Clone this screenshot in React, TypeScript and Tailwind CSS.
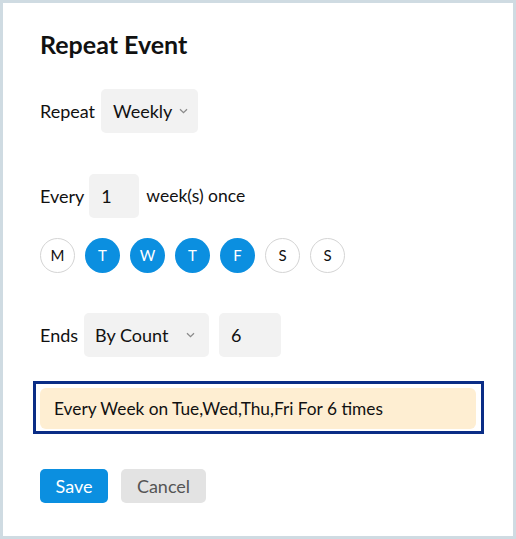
import React from "react";

const Chevron = () => (
  <svg width="9" height="6" viewBox="0 0 9 6" fill="none" className="shrink-0">
    <path d="M1 1.2 L4.5 4.6 L8 1.2" stroke="#8a8a8a" strokeWidth="1.3" />
  </svg>
);

const days = [
  { l: "M", on: false },
  { l: "T", on: true },
  { l: "W", on: true },
  { l: "T", on: true },
  { l: "F", on: true },
  { l: "S", on: false },
  { l: "S", on: false },
];

export default function App() {
  return (
    <div
      className="w-[516px] h-[539px] bg-[#cfdbe2] p-[3px]"
      style={{ fontFamily: "Lato, 'Open Sans', sans-serif" }}
    >
      <div className="h-full w-full bg-white pl-[37px] pt-[25px] text-[#111] text-[18px]">
        <h1 className="text-[25px] leading-[32px] font-bold text-[#111]">Repeat Event</h1>

        <div className="mt-[29px] flex items-center h-[44px]">
          <span>Repeat</span>
          <div className="ml-[6px] h-[44px] w-[97px] rounded-[5px] bg-[#f2f2f2] flex items-center pl-[12px] pr-[10px] justify-between">
            <span>Weekly</span>
            <Chevron />
          </div>
        </div>

        <div className="mt-[41px] flex items-center h-[44px]">
          <span>Every</span>
          <div className="ml-[5px] h-[44px] w-[50px] rounded-[5px] bg-[#f2f2f2] flex items-center pl-[12px]">
            1
          </div>
          <span className="ml-[7px] text-[17.5px]">week(s) once</span>
        </div>

        <div className="mt-[20px] flex gap-[10px]">
          {days.map((d, i) => (
            <div
              key={i}
              className={
                d.on
                  ? "w-[35px] h-[35px] rounded-full bg-[#0b8fe0] text-white flex items-center justify-center text-[15px]"
                  : "w-[35px] h-[35px] rounded-full border border-[#d4d4d4] bg-white text-[#111] flex items-center justify-center text-[15px]"
              }
            >
              {d.l}
            </div>
          ))}
        </div>

        <div className="mt-[40px] flex items-center h-[44px]">
          <span>Ends</span>
          <div className="ml-[6px] h-[44px] w-[125px] rounded-[5px] bg-[#f2f2f2] flex items-center pl-[11px] pr-[14px] justify-between">
            <span>By Count</span>
            <Chevron />
          </div>
          <div className="ml-[10px] h-[44px] w-[62px] rounded-[5px] bg-[#f2f2f2] flex items-center pl-[12px]">
            6
          </div>
        </div>

        <div className="mt-[24px] -ml-[7px] w-[451px] h-[53px] border-[3px] border-[#0a2d86] pl-[4px] pt-[4px] pr-[5px] pb-[2px]">
          <div className="h-full w-full rounded-[6px] bg-[#feeed2] flex items-center pl-[14px] text-[17.3px]">
            Every Week on Tue,Wed,Thu,Fri For 6 times
          </div>
        </div>

        <div className="mt-[35px] flex gap-[13px]">
          <button className="h-[34px] w-[68px] rounded-[5px] bg-[#0b8fe0] text-white text-[18px]">
            Save
          </button>
          <button className="h-[34px] w-[85px] rounded-[5px] bg-[#e3e3e3] text-[#555] text-[18px]">
            Cancel
          </button>
        </div>
      </div>
    </div>
  );
}
